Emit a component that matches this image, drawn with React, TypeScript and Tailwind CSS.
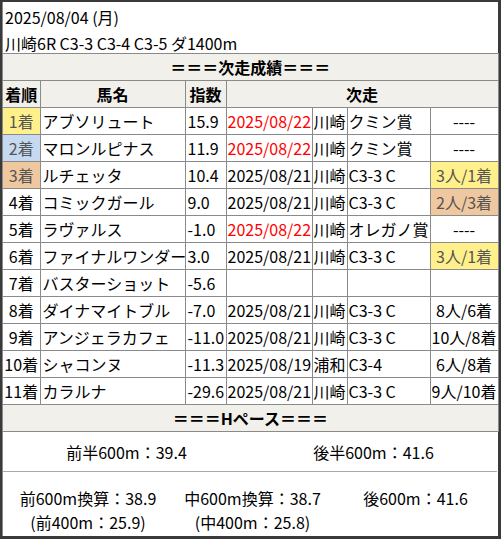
const rankBg: Record<number, string> = {
  1: "bg-[#fff08c] text-[#555]",
  2: "bg-[#c5d9f1] text-[#555]",
  3: "bg-[#f0c8a0] text-[#555]",
};

type Row = {
  rank: number;
  name: string;
  idx: string;
  date?: string;
  red?: boolean;
  place?: string;
  race?: string;
  res?: string;
  resBg?: string;
};

const rows: Row[] = [
  { rank: 1, name: "アブソリュート", idx: "15.9", date: "2025/08/22", red: true, place: "川崎", race: "クミン賞", res: "----" },
  { rank: 2, name: "マロンルピナス", idx: "11.9", date: "2025/08/22", red: true, place: "川崎", race: "クミン賞", res: "----" },
  { rank: 3, name: "ルチェッタ", idx: "10.4", date: "2025/08/21", place: "川崎", race: "C3-3 C", res: "3人/1着", resBg: "bg-[#fff08c] text-[#555]" },
  { rank: 4, name: "コミックガール", idx: "9.0", date: "2025/08/21", place: "川崎", race: "C3-3 C", res: "2人/3着", resBg: "bg-[#f0c8a0] text-[#555]" },
  { rank: 5, name: "ラヴァルス", idx: "-1.0", date: "2025/08/22", red: true, place: "川崎", race: "オレガノ賞", res: "----" },
  { rank: 6, name: "ファイナルワンダー", idx: "3.0", date: "2025/08/21", place: "川崎", race: "C3-3 C", res: "3人/1着", resBg: "bg-[#fff08c] text-[#555]" },
  { rank: 7, name: "バスターショット", idx: "-5.6" },
  { rank: 8, name: "ダイナマイトブル", idx: "-7.0", date: "2025/08/21", place: "川崎", race: "C3-3 C", res: "8人/6着" },
  { rank: 9, name: "アンジェラカフェ", idx: "-11.0", date: "2025/08/21", place: "川崎", race: "C3-3 C", res: "10人/8着" },
  { rank: 10, name: "シャコンヌ", idx: "-11.3", date: "2025/08/19", place: "浦和", race: "C3-4", res: "6人/8着" },
  { rank: 11, name: "カラルナ", idx: "-29.6", date: "2025/08/21", place: "川崎", race: "C3-3 C", res: "9人/10着" },
];

const td = "border border-[#8a8a8a] h-[27px] p-0 whitespace-nowrap overflow-visible";

const App = () => {
  return (
    <div className="w-[501px] h-[539px] bg-[#3a3a3a] pt-[2px] pl-[2px] pr-[3px] pb-[3px] font-['Noto_Sans_CJK_JP',sans-serif] text-[16px] text-black leading-none">
      <div className="bg-white h-full border-l border-[#8a8a8a] flex flex-col">
        {/* header */}
        <div className="pl-[2px] pt-[2px] h-[51px] leading-[26px]">
          <div>2025/08/04 (月)</div>
          <div>川崎6R C3-3 C3-4 C3-5 ダ1400m</div>
        </div>

        <table className="table-fixed border-collapse w-[495px]">
          <colgroup>
            <col className="w-[37px]" />
            <col className="w-[145px]" />
            <col className="w-[41px]" />
            <col className="w-[86px]" />
            <col className="w-[35px]" />
            <col className="w-[83px]" />
            <col className="w-[68px]" />
          </colgroup>
          <tbody>
            <tr className="bg-[#f1f0eb]">
              <td colSpan={7} className={`${td} text-center font-bold border-l-0`}>
                ＝＝＝次走成績＝＝＝
              </td>
            </tr>
            <tr className="bg-[#f1f0eb] font-bold">
              <td className={`${td} text-center border-l-0`}>着順</td>
              <td className={`${td} text-center`}>馬名</td>
              <td className={`${td} text-center`}>指数</td>
              <td colSpan={4} className={`${td} text-center`}>次走</td>
            </tr>
            {rows.map((r) => (
              <tr key={r.rank}>
                <td className={`${td} text-center border-l-0 ${rankBg[r.rank] ?? ""}`}>{r.rank}着</td>
                <td className={`${td} pl-[2px]`}>{r.name}</td>
                <td className={`${td} pl-[2px]`}>{r.idx}</td>
                <td className={`${td} pl-[1px] ${r.red ? "text-[#ff0000]" : ""}`}>{r.date}</td>
                <td className={`${td} pl-[1px]`}>{r.place}</td>
                <td className={`${td} pl-[1px]`}>{r.race}</td>
                <td className={`${td} text-center ${r.resBg ?? ""}`}>{r.res}</td>
              </tr>
            ))}
            <tr className="bg-[#f1f0eb]">
              <td colSpan={7} className={`${td} text-center font-bold border-l-0`}>
                ＝＝＝Hペース＝＝＝
              </td>
            </tr>
          </tbody>
        </table>

        {/* pace */}
        <div className="grid grid-cols-2 h-[40px] items-center border-b border-[#aaa] mr-[1px]">
          <div className="text-center">前半600m：39.4</div>
          <div className="text-center">後半600m：41.6</div>
        </div>
        <div className="grid grid-cols-3 pt-[14px] leading-[24px]">
          <div className="text-center pl-[5px]">
            <div>前600m換算：38.9</div>
            <div>(前400m：25.9)</div>
          </div>
          <div className="text-center pl-[4px]">
            <div>中600m換算：38.7</div>
            <div>(中400m：25.8)</div>
          </div>
          <div className="text-center">
            <div>後600m：41.6</div>
          </div>
        </div>
      </div>
    </div>
  );
};

export default App;
